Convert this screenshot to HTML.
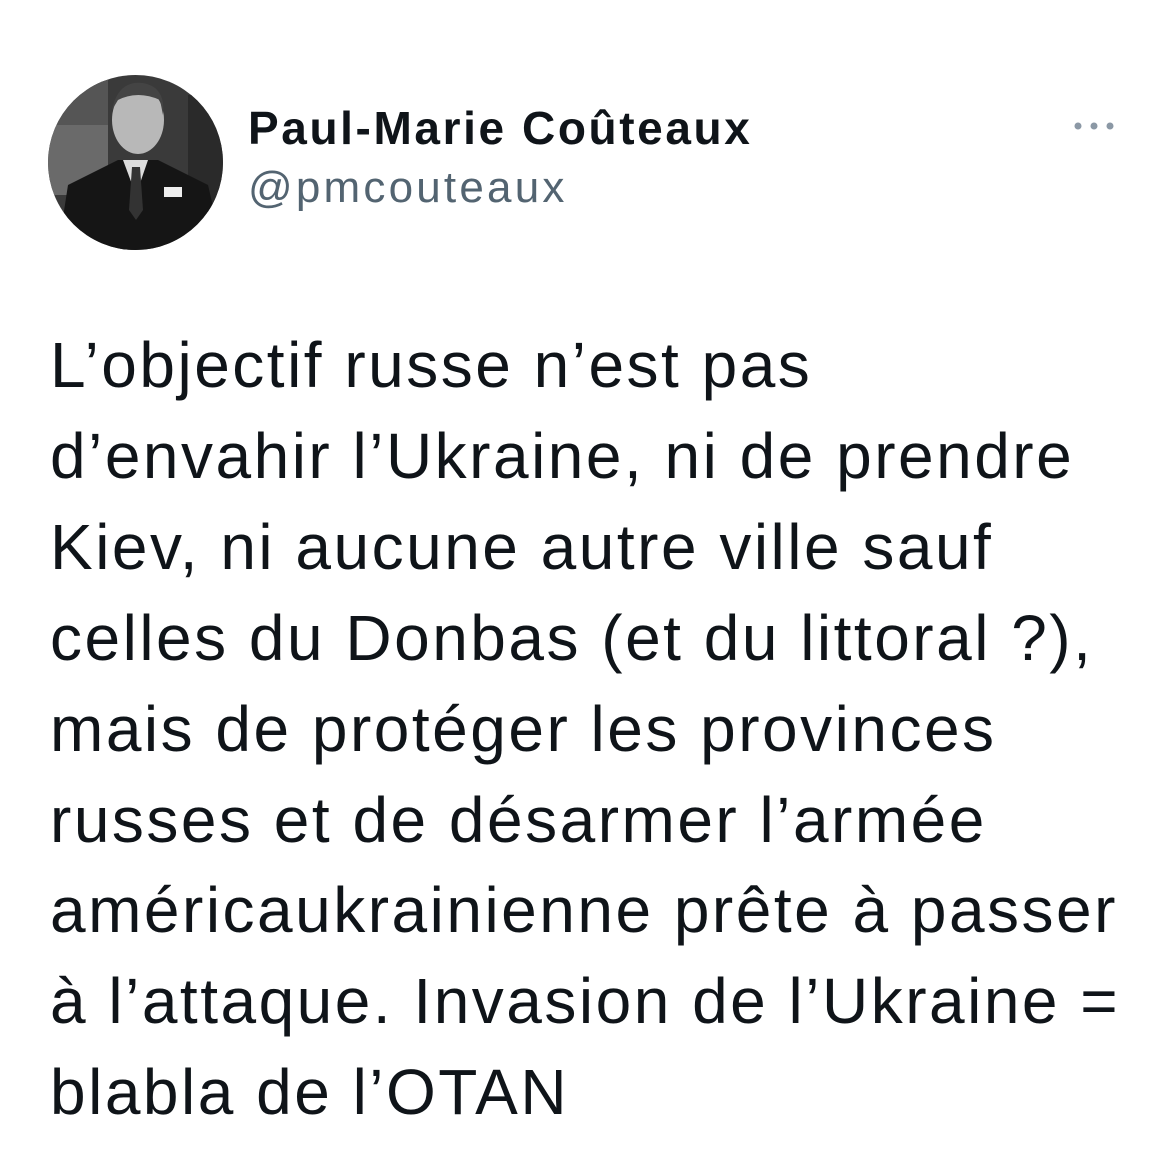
<!DOCTYPE html>
<html><head><meta charset="utf-8"><style>
body{margin:0;width:1170px;height:1172px;background:#fff;overflow:hidden;font-family:"Liberation Sans",Arial,sans-serif;color:#0f1419;position:relative}
.name{position:absolute;left:248px;top:105px;font-size:46px;line-height:46px;font-weight:bold;letter-spacing:2.6px}
.handle{position:absolute;left:248px;top:166px;font-size:44px;line-height:44px;color:#536471;letter-spacing:3.2px}
.dots{position:absolute;left:1072px;top:118px}
.txt{position:absolute;left:50px;top:320px;font-size:64px;line-height:90.9px;width:1120px;letter-spacing:2.5px}
.txt div{white-space:nowrap}
</style></head><body>
<svg style="position:absolute;left:48px;top:75px" width="175" height="175" viewBox="0 0 175 175">
<defs><clipPath id="c"><circle cx="87.5" cy="87.5" r="87.5"/></clipPath></defs>
<g clip-path="url(#c)">
<rect width="175" height="175" fill="#3a3a3a"/>
<rect x="0" y="0" width="60" height="50" fill="#555"/>
<rect x="0" y="50" width="60" height="70" fill="#6a6a6a"/>
<rect x="140" y="20" width="35" height="120" fill="#2a2a2a"/>
<path d="M10 175 L20 110 L70 85 L110 85 L160 110 L175 175Z" fill="#151515"/>
<path d="M75 85 L88 120 L100 85Z" fill="#ddd"/>
<path d="M84 92 L92 92 L95 135 L88 145 L81 135Z" fill="#333"/>
<ellipse cx="90" cy="45" rx="26" ry="34" fill="#b8b8b8"/>
<path d="M64 35 Q70 5 95 8 Q118 12 115 40 L112 25 Q90 15 70 25Z" fill="#444"/>
<rect x="116" y="112" width="18" height="10" fill="#eee"/>
</g></svg>
<div class="name">Paul-Marie Coûteaux</div>
<div class="handle">@pmcouteaux</div>
<svg class="dots" width="46" height="16"><circle cx="6" cy="8" r="3.5" fill="#8b98a5"/><circle cx="22" cy="8" r="3.5" fill="#8b98a5"/><circle cx="38" cy="8" r="3.5" fill="#8b98a5"/></svg>
<div class="txt">
<div>L’objectif russe n’est pas</div>
<div>d’envahir l’Ukraine, ni de prendre</div>
<div>Kiev, ni aucune autre ville sauf</div>
<div>celles du Donbas (et du littoral ?),</div>
<div>mais de protéger les provinces</div>
<div>russes et de désarmer l’armée</div>
<div>américaukrainienne prête à passer</div>
<div>à l’attaque. Invasion de l’Ukraine =</div>
<div>blabla de l’OTAN</div>
</div>
</body></html>
